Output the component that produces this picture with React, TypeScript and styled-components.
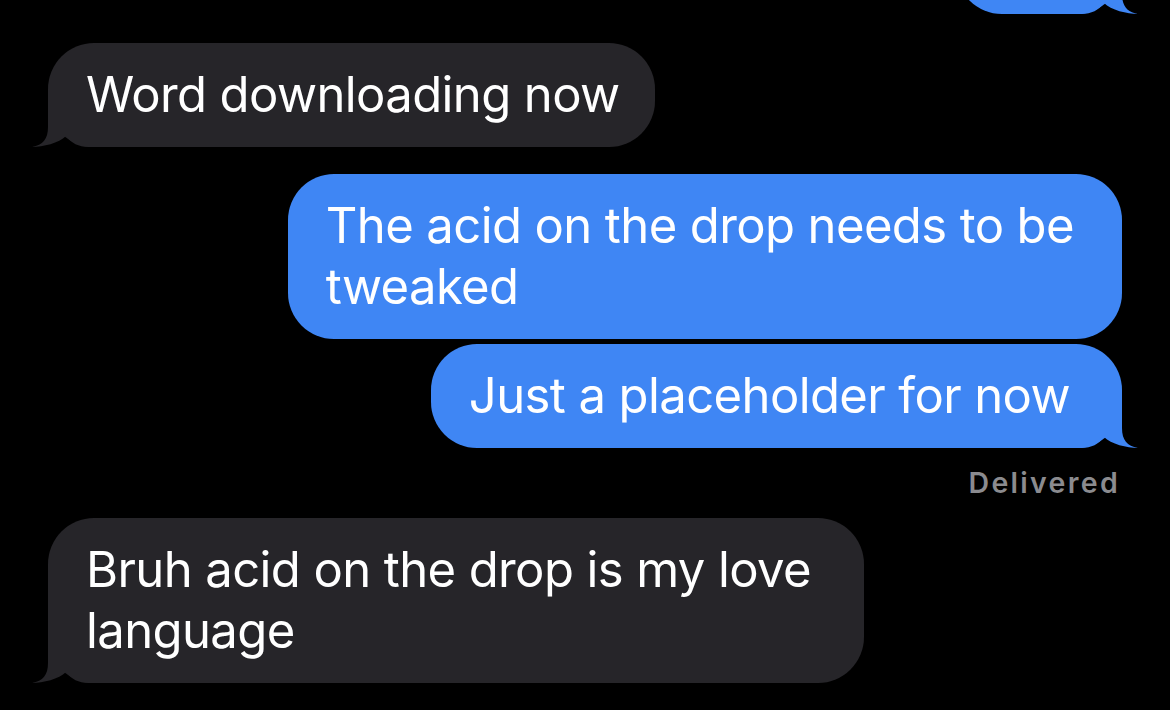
import React from "react";
import styled, { createGlobalStyle } from "styled-components";

const BLUE = "#3f86f4";
const GRAY = "#262529";

const GlobalStyle = createGlobalStyle`
  html, body {
    margin: 0;
    padding: 0;
    background: #000;
    overflow: hidden;
  }
  * { box-sizing: border-box; }
`;

const Screen = styled.div`
  width: 1170px;
  height: 710px;
  background: #000;
  overflow: hidden;
  font-family: Inter, "Liberation Sans", sans-serif;
`;

const Thread = styled.div`
  display: flex;
  flex-direction: column;
  padding: 0 48px;
  margin-top: -90px;
`;

const Row = styled.div<{ $out: boolean; $gap: number }>`
  display: flex;
  justify-content: ${(p) => (p.$out ? "flex-end" : "flex-start")};
  margin-top: ${(p) => p.$gap}px;
`;

const Bubble = styled.div<{ $out: boolean; $padRight: number }>`
  position: relative;
  background: ${(p) => (p.$out ? BLUE : GRAY)};
  color: #fff;
  border-radius: 46px;
  padding: 21px ${(p) => p.$padRight}px 22px 38px;
  font-size: 49px;
  line-height: 61px;
  letter-spacing: -0.6px;
  white-space: pre;
`;

const EarlierBubble = styled(Bubble)`
  width: 166px;
  height: 104px;
`;

const BubbleText = styled.span`
  position: relative;
`;

const Tail = styled.svg<{ $out: boolean }>`
  position: absolute;
  bottom: 0;
  width: 64px;
  height: 48px;
  ${(p) => (p.$out ? "right: -17px; transform: scaleX(-1);" : "left: -17px;")}
`;

const Status = styled.div`
  align-self: flex-end;
  margin-top: 18px;
  margin-right: 2px;
  font-size: 28.5px;
  line-height: 34px;
  font-weight: 600;
  color: #8b8b8f;
  letter-spacing: 2.3px;
`;

type Msg = { text: string; out: boolean; gap: number; tail: boolean; padRight: number };

const messages: Msg[] = [
  { text: "Word downloading now", out: false, gap: 29, tail: true, padRight: 35 },
  { text: "The acid on the drop needs to be\ntweaked", out: true, gap: 27, tail: false, padRight: 48 },
  { text: "Just a placeholder for now", out: true, gap: 5, tail: true, padRight: 52 },
];

const last: Msg = {
  text: "Bruh acid on the drop is my love\nlanguage",
  out: false,
  gap: 18,
  tail: true,
  padRight: 53,
};

const TailShape: React.FC<{ out: boolean }> = ({ out }) => (
  <Tail $out={out} viewBox="0 0 64 48" aria-hidden>
    <path
      d="M17,0 L17,28 C17,40 12,46 1,48 C12,48 28,44 35,37 C40,44 48,48 57,48 L64,48 L64,0 Z"
      fill={out ? BLUE : GRAY}
    />
  </Tail>
);

const Message: React.FC<{ m: Msg }> = ({ m }) => (
  <Row $out={m.out} $gap={m.gap}>
    <Bubble $out={m.out} $padRight={m.padRight}>
      {m.tail && <TailShape out={m.out} />}
      <BubbleText>{m.text}</BubbleText>
    </Bubble>
  </Row>
);

export default function App() {
  return (
    <Screen>
      <GlobalStyle />
      <Thread>
        <Row $out={true} $gap={0}>
          <EarlierBubble $out={true} $padRight={38} aria-label="Earlier message">
            <TailShape out={true} />
          </EarlierBubble>
        </Row>
        {messages.map((m, i) => (
          <Message key={i} m={m} />
        ))}
        <Status>Delivered</Status>
        <Message m={last} />
      </Thread>
    </Screen>
  );
}
